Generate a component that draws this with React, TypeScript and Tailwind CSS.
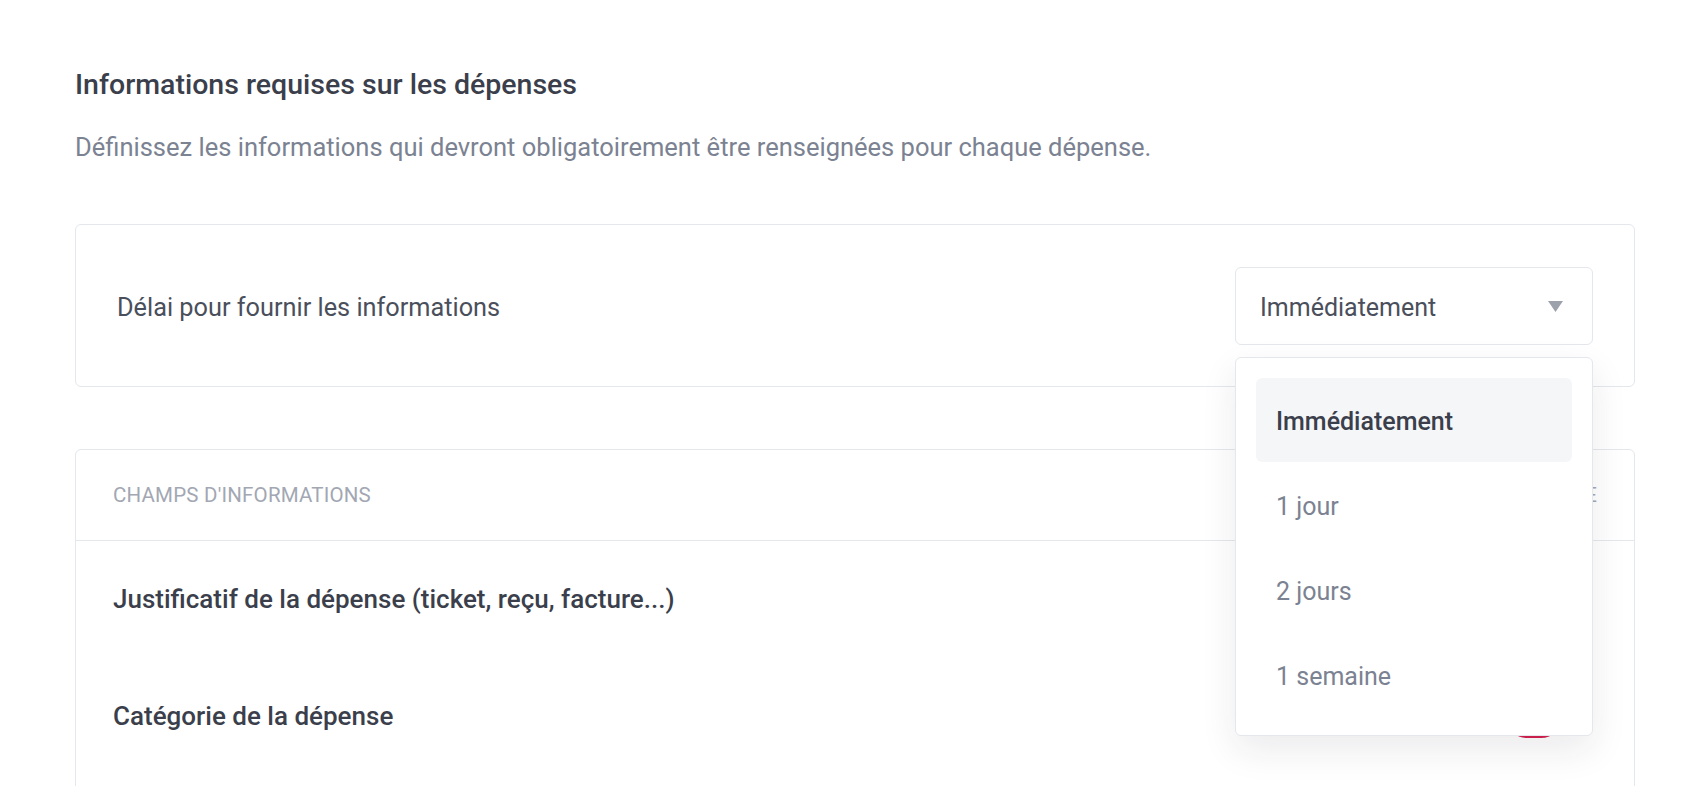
import { useState } from 'react';

const DELAYS = ['Immédiatement', '1 jour', '2 jours', '1 semaine'];

const FIELDS = [
  { id: 'receipt', label: 'Justificatif de la dépense (ticket, reçu, facture...)', required: true },
  { id: 'category', label: 'Catégorie de la dépense', required: true },
];

export default function App() {
  const [delay, setDelay] = useState('Immédiatement');
  const [open, setOpen] = useState(true);
  const [fields, setFields] = useState(FIELDS);

  function toggle(id: string) {
    setFields(prev => prev.map(f => (f.id === id ? { ...f, required: !f.required } : f)));
  }

  return (
    <main className="h-[786px] overflow-hidden bg-white font-['Roboto',sans-serif] text-[#3b3f4c]">
      <div className="ml-[75px] w-[1560px] pt-[68px]">
        <h2 className="text-[28.5px] leading-[34px] font-medium">Informations requises sur les dépenses</h2>
        <p className="mt-[29px] text-[25.5px] leading-[32px] text-[#7b8292]">
          Définissez les informations qui devront obligatoirement être renseignées pour chaque dépense.
        </p>

        <div className="mt-[61px] flex items-center justify-between rounded-md border border-[#e4e7eb] px-[41px] pt-[42px] pb-[41px]">
          <span className="pt-[4px] text-[25.3px] text-[#4a4f5c]">Délai pour fournir les informations</span>
          <div className="relative">
            <button
              onClick={() => setOpen(o => !o)}
              className="flex h-[78px] w-[358px] items-center justify-between rounded-md border border-[#e4e7eb] bg-white pl-[24px] pr-[29px] text-[25px] text-[#4a4f5c]"
            >
              <span className="pt-[4px]">{delay}</span>
              <svg width="15" height="11" viewBox="0 0 15 11">
                <path d="M0 0 H15 L7.5 11 Z" fill="#9ca1ab" />
              </svg>
            </button>
            {open && (
              <div className="absolute left-0 top-[90px] z-10 flex w-[358px] flex-col gap-[1px] rounded-md border border-[#e4e7eb] bg-white pt-[20px] pb-[18px] px-[20px] shadow-[0_14px_36px_rgba(30,35,50,0.09)]">
                {DELAYS.map(d => (
                  <div
                    key={d}
                    onClick={() => { setDelay(d); setOpen(false); }}
                    className={`flex h-[84px] items-center rounded-md px-[20px] pt-[3px] text-[25px] ${
                      d === delay ? 'bg-[#f5f6f8] font-medium text-[#3b3f4c]' : 'text-[#7b8292]'
                    }`}
                  >
                    {d}
                  </div>
                ))}
              </div>
            )}
          </div>
        </div>

        <div className="mt-[62px] rounded-md border border-[#e4e7eb] pb-[40px]">
          <div className="flex h-[91px] items-center justify-between border-b border-[#e4e7eb] px-[37px] text-[20.5px] uppercase tracking-[0.2px] text-[#a2a7b3]">
            <span>Champs d'informations</span>
            <span>Obligatoire</span>
          </div>
          {fields.map(f => (
            <div key={f.id} className="flex h-[117px] items-center justify-between pl-[37px] pr-[72px]">
              <span className="text-[26px] font-medium text-[#3b3f4c]">{f.label}</span>
              <button
                onClick={() => toggle(f.id)}
                className={`flex h-[42px] w-[56px] items-center rounded-full p-[4px] ${
                  f.required ? 'justify-end bg-[#d6204e]' : 'justify-start bg-[#d9dce2]'
                }`}
              >
                <span className="h-[34px] w-[34px] rounded-full bg-white" />
              </button>
            </div>
          ))}
        </div>
      </div>
    </main>
  );
}
